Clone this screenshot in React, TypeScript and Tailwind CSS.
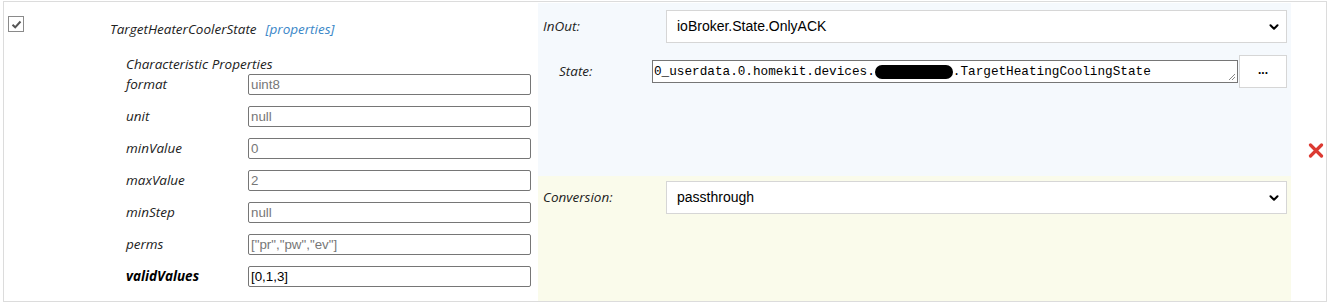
import { ChevronDown } from "lucide-react"

const props: { name: string; value: string; bold?: boolean }[] = [
  { name: "format", value: "uint8" },
  { name: "unit", value: "null" },
  { name: "minValue", value: "0" },
  { name: "maxValue", value: "2" },
  { name: "minStep", value: "null" },
  { name: "perms", value: '["pr","pw","ev"]' },
  { name: "validValues", value: "[0,1,3]", bold: true },
]

const FakeSelect = ({ value }: { value: string }) => (
  <div className="w-[621px] h-[33px] bg-white border border-[#d6d6d6] flex items-center justify-between pl-[10px] pr-[5px] font-['Liberation_Sans',Arial,sans-serif] text-[14px] text-black">
    <span>{value}</span>
    <ChevronDown size={14} strokeWidth={3.5} className="text-black" />
  </div>
)

const App = () => {
  return (
    <div className="w-[1330px] h-[303px] bg-white pt-px pl-[3px] font-['Open_Sans',sans-serif]">
      <div className="flex w-[1324px] h-[301px] border border-[#dcdcdc]">
        {/* checkbox + characteristic name */}
        <div className="w-[534px] flex">
          <div className="w-[106px] pl-[4px] pt-[14px]">
            <div className="w-[16px] h-[16px] border border-[#8a8a8a] bg-white flex items-center justify-center">
              <svg width="11" height="11" viewBox="0 0 11 11">
                <path d="M1.5 5.8 L4.2 8.3 L9.5 2.5" fill="none" stroke="#555" strokeWidth="2" />
              </svg>
            </div>
          </div>
          <div className="flex-1 pt-[17px]">
            <div className="h-[20px] flex items-center gap-[9px] italic text-[13.5px] text-[#222]">
              <span>TargetHeaterCoolerState</span>
              <span className="text-[#3a87c8]">[properties]</span>
            </div>
            <div className="pl-[16px] mt-[15px]">
              <div className="h-[20px] flex items-center italic text-[13.5px] text-[#222]">Characteristic Properties</div>
              <div className="flex flex-col gap-[11px]">
                {props.map((p) => (
                  <div key={p.name} className="flex items-center h-[21px]">
                    <span className={`w-[122px] italic text-[13.5px] ${p.bold ? "font-bold text-black" : "text-[#222]"}`}>{p.name}</span>
                    <div className={`w-[283px] h-[21px] border border-[#767676] rounded-[2px] bg-white flex items-center pl-[2px] font-['Liberation_Sans',Arial,sans-serif] text-[13.33px] ${p.bold ? "text-black" : "text-[#777]"}`}>
                      {p.value}
                    </div>
                  </div>
                ))}
              </div>
            </div>
          </div>
        </div>

        {/* in/out + conversion panel */}
        <div className="w-[753px] flex flex-col">
          <div className="h-[173px] bg-[#f5f9fd] mt-px pt-[7px] pl-[5px]">
            <div className="flex items-center">
              <span className="w-[123px] italic text-[13.5px] text-[#222]">InOut:</span>
              <FakeSelect value="ioBroker.State.OnlyACK" />
            </div>
            <div className="flex items-center mt-[12px]">
              <span className="w-[109px] pl-[16px] italic text-[13.5px] text-[#222]">State:</span>
              <div className="relative w-[586px] h-[23px] border border-[#767676] bg-white flex items-center pl-[1px] font-['Liberation_Mono',monospace] text-[12.7px] text-black whitespace-nowrap">
                <span>0_userdata.0.homekit.devices.</span>
                <span className="inline-block w-[78px] h-[14px] bg-black rounded-full" />
                <span>.TargetHeatingCoolingState</span>
                <svg className="absolute right-[1px] bottom-[1px]" width="8" height="8" viewBox="0 0 8 8">
                  <path d="M7 1 L1 7 M7 4 L4 7" stroke="#888" strokeWidth="1" />
                </svg>
              </div>
              <div className="ml-px w-[48px] h-[33px] border border-[#d6d6d6] bg-white flex items-center justify-center font-['Liberation_Sans',Arial,sans-serif] text-[12px] font-bold text-black pb-[4px]">
                ...
              </div>
            </div>
          </div>
          <div className="flex-1 bg-[#fafbeb] pt-[5px] pl-[5px]">
            <div className="flex items-center">
              <span className="w-[123px] italic text-[13.5px] text-[#222]">Conversion:</span>
              <FakeSelect value="passthrough" />
            </div>
          </div>
        </div>

        {/* delete */}
        <div className="flex-1 flex items-center justify-end pr-[2px] pb-[2px]">
          <svg width="16" height="15" viewBox="0 0 16 15">
            <path d="M2.5 2 L13.5 13 M13.5 2 L2.5 13" stroke="#dc3a32" strokeWidth="3.2" strokeLinecap="round" />
          </svg>
        </div>
      </div>
    </div>
  )
}

export default App
